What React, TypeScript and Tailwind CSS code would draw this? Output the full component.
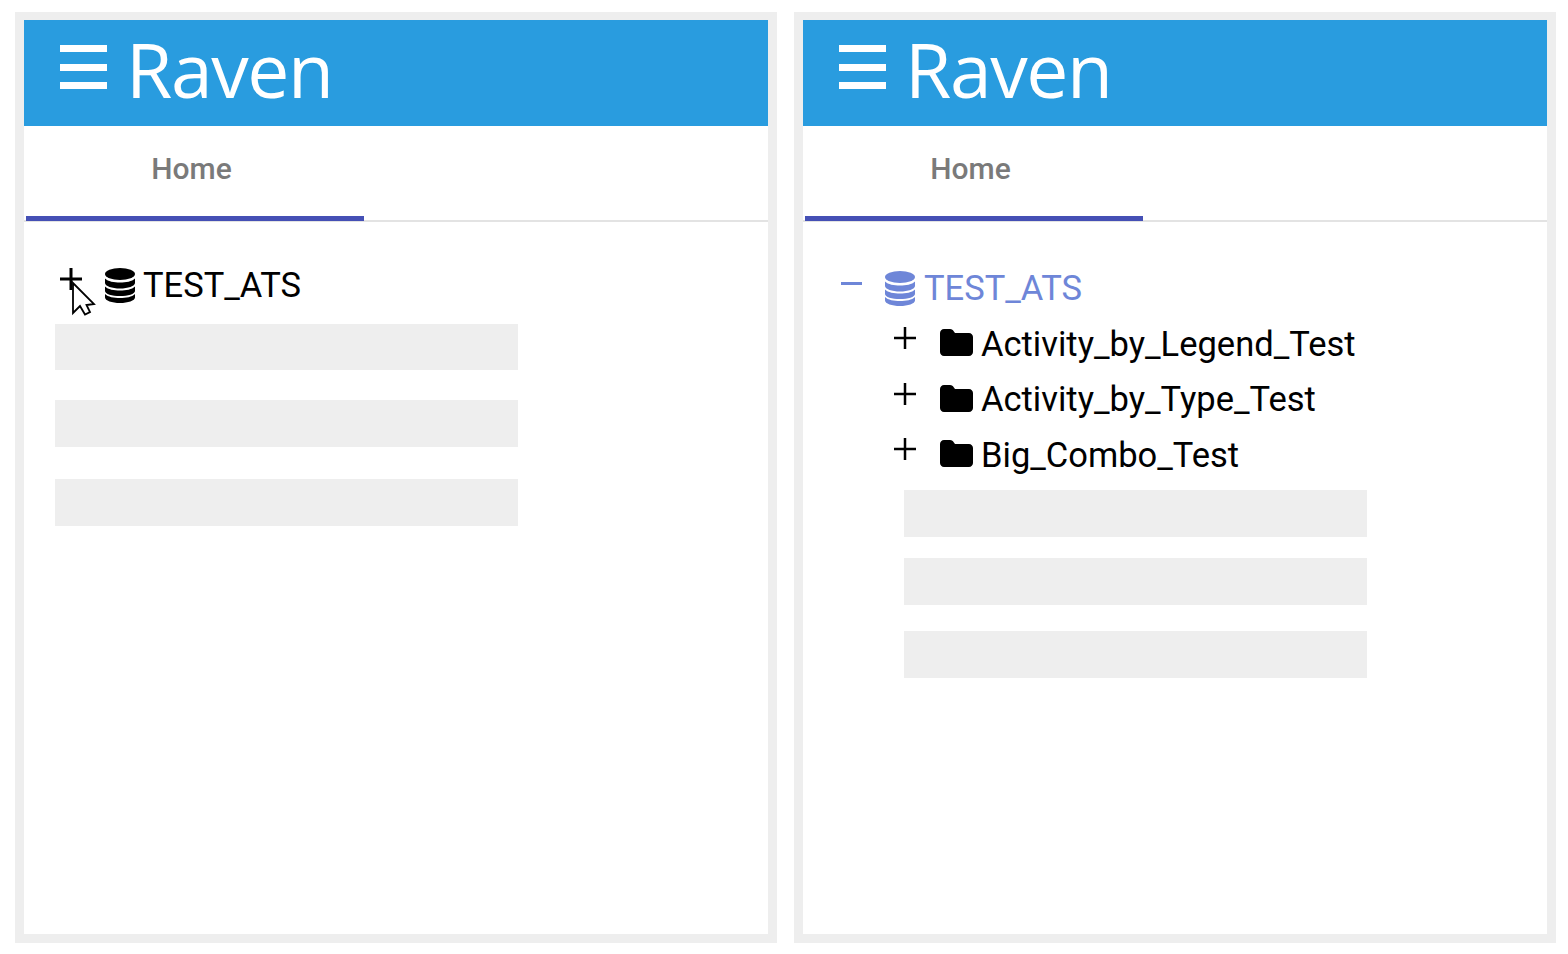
import React from 'react';

function Hamburger() {
  return (
    <div className="flex flex-col justify-between w-[47px] h-[44px] mb-[12px]">
      <div className="h-[7px] bg-white" />
      <div className="h-[7px] bg-white" />
      <div className="h-[7px] bg-white" />
    </div>
  );
}

function Database({ color }: { color: string }) {
  return (
    <svg width="30" height="35" viewBox="0 0 30 35" fill={color}>
      <ellipse cx="15" cy="6" rx="15" ry="6" />
      <path d="M0 10.5C3 13.5 9 14.5 15 14.5S27 13.5 30 10.5V15C30 18 23 20.5 15 20.5S0 18 0 15Z" />
      <path d="M0 18.5C3 21.5 9 22.5 15 22.5S27 21.5 30 18.5V23C30 26 23 28 15 28S0 26 0 23Z" />
      <path d="M0 26C3 29 9 30 15 30S27 29 30 26V29.5C30 32.5 23 35 15 35S0 32.5 0 29.5Z" />
    </svg>
  );
}

function Folder() {
  return (
    <svg width="33" height="27" viewBox="0 0 33 27" fill="#000">
      <path d="M4 0H10C12 0 13 1 13.5 2L15 4H29C31.2 4 33 5.8 33 8V23C33 25.2 31.2 27 29 27H4C1.8 27 0 25.2 0 23V4C0 1.8 1.8 0 4 0Z" />
    </svg>
  );
}

function Plus({ weight }: { weight: number }) {
  return (
    <svg width="22" height="22" viewBox="0 0 22 22" stroke="#000" strokeWidth={weight}>
      <path d="M0 11H22M11 0V22" />
    </svg>
  );
}

function Cursor() {
  return (
    <svg width="26" height="38" viewBox="0 0 26 38" fill="#fff" stroke="#000" strokeWidth="1.8" className="absolute left-[71px] top-[280px]">
      <path d="M2 3V33L9 26L14 34.5L19 32L15.5 25L23 24Z" />
    </svg>
  );
}

function Header() {
  return (
    <>
      <div className="h-[106px] bg-[#299cdf] flex items-center pl-[36px] gap-[19px]">
        <Hamburger />
        <span className="text-white text-[75px] leading-none tracking-[-1.4px] font-['Open_Sans',sans-serif] font-normal pb-[8px]">Raven</span>
      </div>
      <div className="h-[96px] border-b-2 border-[#e3e3e3] pl-[2px]">
        <div className="w-[338px] h-[95px] border-b-[5px] border-[#4550b5] text-center pt-[25px] pr-[7px] text-[30px] leading-[36px] font-medium text-[#7a7a7a] font-['Roboto',sans-serif]">
          Home
        </div>
      </div>
    </>
  );
}

function Skeleton({ className }: { className: string }) {
  return <div className={`w-[463px] h-[46.5px] bg-[#eeeeee] ${className}`} />;
}

const children = ['Activity_by_Legend_Test', 'Activity_by_Type_Test', 'Big_Combo_Test'];

export default function App() {
  return (
    <div className="w-[1568px] h-[954px] bg-white pt-[12px] pl-[15px] flex gap-[17px] font-['Roboto',sans-serif] overflow-hidden relative">
      <div className="w-[762px] h-[931px] border-[9px] border-t-[8px] border-[#eeeeee]">
        <Header />
        <div className="pl-[31px] pt-[44px]">
          <div className="flex items-center h-[38px] pl-[5px]">
            <div className="mb-[12px]"><Plus weight={3} /></div>
            <div className="ml-[23px]"><Database color="#000" /></div>
            <span className="ml-[8px] text-[34.5px] leading-none text-black">TEST_ATS</span>
          </div>
          <Skeleton className="mt-[19.5px]" />
          <Skeleton className="mt-[30px]" />
          <Skeleton className="mt-[32.5px]" />
        </div>
      </div>
      <div className="w-[762px] h-[931px] border-[9px] border-t-[8px] border-[#eeeeee]">
        <Header />
        <div className="pt-[47px]">
          <div className="flex items-center h-[38px] pl-[38px]">
            <div className="w-[21px] h-[3px] bg-[#6e86d8] mb-[10px]" />
            <div className="ml-[23px]"><Database color="#6e86d8" /></div>
            <span className="ml-[9px] text-[34.5px] leading-none text-[#6e86d8]">TEST_ATS</span>
          </div>
          <div className="pl-[91px] mt-[18px] flex flex-col gap-[17.5px]">
            {children.map((name) => (
              <div key={name} className="flex items-center h-[38px]">
                <div className="mb-[12px]"><Plus weight={2.5} /></div>
                <div className="ml-[24px] mb-[3px]"><Folder /></div>
                <span className="ml-[8px] text-[34.5px] leading-none text-black">{name}</span>
              </div>
            ))}
          </div>
          <div className="pl-[101px]">
            <Skeleton className="mt-[16px]" />
            <Skeleton className="mt-[21.5px]" />
            <Skeleton className="mt-[26.5px]" />
          </div>
        </div>
      </div>
      <Cursor />
    </div>
  );
}
